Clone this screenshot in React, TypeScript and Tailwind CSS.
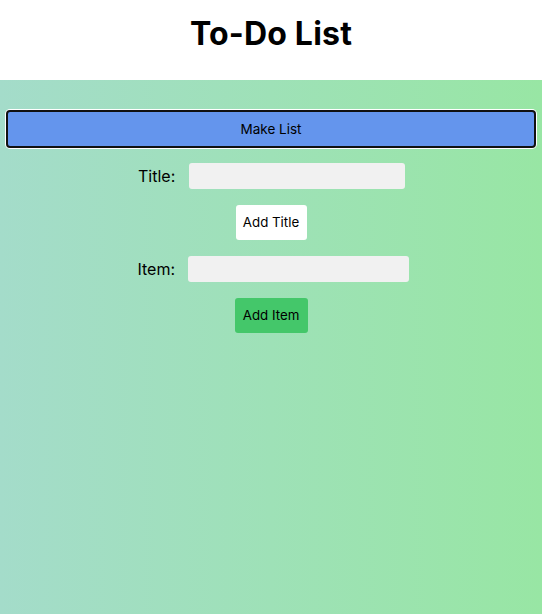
import React from "react";

export default function App() {
  return (
    <div className="min-h-[614px] flex flex-col font-['Inter','Noto_Sans',sans-serif] text-black">
      <header className="h-[80px] bg-white flex items-center justify-center">
        <h1 className="text-[32px] font-bold leading-none -mt-[12px] tracking-[0.2px]">To-Do List</h1>
      </header>
      <main className="flex-1 bg-[linear-gradient(to_right,#a4dcca,#98e6a4)] flex flex-col items-center pt-[30px]">
        <div className="w-full px-[6px]">
          <button className="w-full h-[38px] bg-[#6495ed] border-2 border-[#111] rounded-[4px] shadow-[0_0_0_1px_white] text-[13.5px]">
            Make List
          </button>
        </div>
        <div className="flex items-center mt-[15px] gap-[14px] ml-[1px]">
          <label className="text-[16px] w-[37px] text-right whitespace-nowrap">Title:</label>
          <input className="w-[216px] h-[26px] bg-[#f1f1f1] rounded-[3px] outline-none" />
        </div>
        <button className="mt-[16px] w-[71px] h-[35px] bg-white rounded-[3px] text-[13.3px]">Add Title</button>
        <div className="flex items-center mt-[16px] gap-[13px] ml-[1px]">
          <label className="text-[16px] w-[41px] text-right whitespace-nowrap">Item:</label>
          <input className="w-[221px] h-[26px] bg-[#f1f1f1] rounded-[3px] outline-none" />
        </div>
        <button className="mt-[16px] w-[73px] h-[35px] bg-[#44c76a] rounded-[3px] text-[13.3px]">Add Item</button>
      </main>
    </div>
  );
}
